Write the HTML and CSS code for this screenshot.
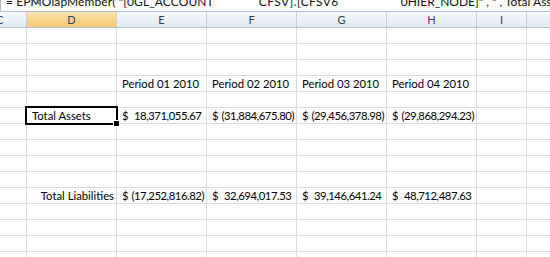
FILE: index.html
```html
<!DOCTYPE html>
<html lang="en">
<head>
    <meta charset="UTF-8">
    <title>Balance Sheet</title>
    <link rel="stylesheet" href="styles.css">
</head>
<body>
    <div class="formula-bar">
        <div class="fx-box"><span class="fx">fx</span></div>
        <div class="formula"><span class="f1">= EPMOlapMember( "[0GL_ACCOUNT</span><span class="f2">CFSV].[CFSV6</span><span class="f3">0HIER_NODE]" , " , Total Asse</span></div>
    </div>

    <div class="col-heads">
        <div class="head">C</div>
        <div class="head active">D</div>
        <div class="head">E</div>
        <div class="head">F</div>
        <div class="head">G</div>
        <div class="head">H</div>
        <div class="head">I</div>
        <div class="head"></div>
    </div>

    <div class="sheet" id="sheet">
        <!-- rows are filled in below -->
    </div>

    <script>
        const rows = [
            [], [], [],
            ['', '', 'Period 01 2010', 'Period 02 2010', 'Period 03 2010', 'Period 04 2010'],
            [],
            ['', {text: 'Total Assets', cls: 'selected'}, 18371055.67, -31884675.80, -29456378.98, -29868294.23],
            [], [], [], [],
            ['', {text: 'Total Liabilities', cls: 'right'}, -17252816.82, 32694017.53, 39146641.24, 48712487.63],
            [], [], [], []
        ];

        const sheet = document.getElementById('sheet');

        function money(value) {
            const abs = Math.abs(value).toLocaleString('en-US', {minimumFractionDigits: 2, maximumFractionDigits: 2});
            const num = value < 0 ? `(${abs})` : `${abs}<span class="paren">)</span>`;
            return `<span>$</span><span>${num}</span>`;
        }

        rows.forEach(row => {
            for (let i = 0; i < 8; i++) {
                const cell = document.createElement('div');
                cell.className = 'cell';
                const v = row[i];
                if (typeof v === 'number') {
                    cell.classList.add('money');
                    cell.innerHTML = money(v);
                } else if (v && typeof v === 'object') {
                    cell.classList.add(v.cls);
                    cell.textContent = v.text;
                } else if (v) {
                    cell.textContent = v;
                }
                sheet.appendChild(cell);
            }
        });
    </script>
</body>
</html>
```

FILE: styles.css
```css
body {
    margin: 0;
    padding: 0;
    width: 550px;
    height: 257px;
    overflow: hidden;
    background-color: #fff;
    font-family: Lato, "Open Sans", sans-serif;
}
.formula-bar {
    display: flex;
    height: 11px;
    border-bottom: 1px solid #b1c0d4;
    overflow: hidden;
}
.fx-box {
    width: 44px;
    background-color: #dde6f1;
    border-right: 1px solid #a9bbd1;
    position: relative;
}
.fx {
    position: absolute;
    left: 31px;
    top: -5px;
    font-family: "DejaVu Serif", serif;
    font-style: italic;
    font-size: 10px;
    color: #3d4d63;
}
.formula {
    flex: 1;
    white-space: pre;
    font-size: 12px;
    line-height: 12px;
    margin-top: -4px;
    padding-left: 5px;
    color: #111;
}
.f1 {
    letter-spacing: 0.1px;
}
.f2 {
    margin-left: 45px;
    letter-spacing: 0.4px;
}
.f3 {
    margin-left: 62px;
}
.col-heads,
.sheet {
    display: grid;
    grid-template-columns: 26px 89px 89px 89px 89px 89px 49px 1fr;
    column-gap: 1px;
}
.col-heads {
    height: 15px;
    background-color: #c4cfdd;
    border-bottom: 1px solid #b7c4d6;
}
.head {
    background: linear-gradient(#f7f9fc, #e2e8f0);
    color: #2f3f57;
    font-size: 11px;
    line-height: 15px;
    text-align: center;
}
.head:first-child {
    text-align: left;
    text-indent: -4px;
}
.head.active {
    background: linear-gradient(#fbe2ad, #f5c874);
    color: #2f3f57;
}
.sheet {
    grid-auto-rows: 15px;
    row-gap: 1px;
    background-color: #d6dce8;
}
.cell {
    background-color: #fff;
    font-size: 11.3px;
    line-height: 15px;
    padding: 0 5px;
    white-space: nowrap;
    color: #000;
}
.money {
    display: flex;
    justify-content: space-between;
    padding: 0 2px 0 5px;
    letter-spacing: -0.45px;
}
.paren {
    visibility: hidden;
}
.right {
    text-align: right;
    padding-right: 2px;
}
.selected {
    position: relative;
    outline: 2px solid #000;
    outline-offset: 0;
    z-index: 1;
}
.selected::after {
    content: "";
    position: absolute;
    right: -4px;
    bottom: -4px;
    width: 5px;
    height: 5px;
    background-color: #000;
    border: 1px solid #fff;
}
```
